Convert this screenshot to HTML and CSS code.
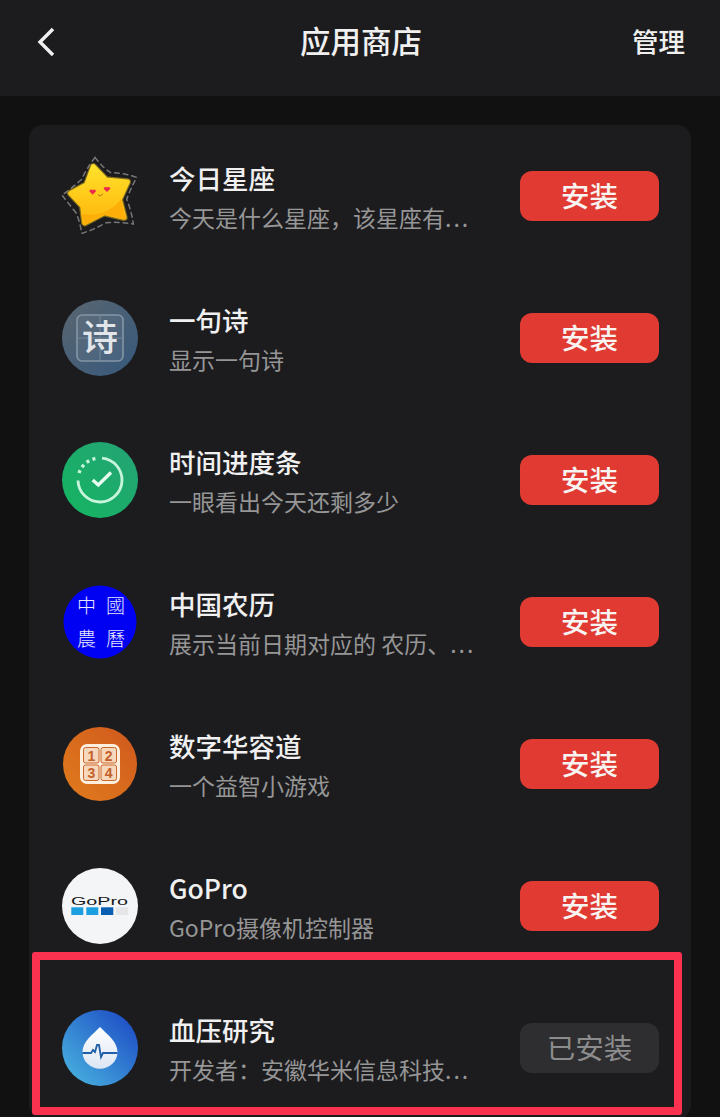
FILE: index.html

```html
<!DOCTYPE html>
<html lang="zh-CN">
<head>
  <meta charset="UTF-8">
  <title>应用商店</title>
  <link rel="stylesheet" href="styles.css">
</head>
<body>

  <header class="top-bar">
    <div class="top-side">
      <svg class="back-icon" width="20" height="32" viewBox="0 0 20 32">
        <path d="M16 3 L3 16 L16 29" fill="none" stroke="#f0f0f0" stroke-width="3.4"/>
      </svg>
    </div>
    <h1 class="top-title">应用商店</h1>
    <div class="top-side top-manage">管理</div>
  </header>

  <main class="app-card">

    <div class="app-row">
      <div class="app-icon">
        <svg width="76" height="76" viewBox="66 54 228 228">
          <defs>
            <linearGradient id="starFill" x1="0" y1="0" x2="0" y2="1">
              <stop offset="0" stop-color="#ffe02a"/>
              <stop offset="1" stop-color="#ffb60c"/>
            </linearGradient>
          </defs>
          <path d="M165 52 Q190 85 212 98 Q250 98 290 112 Q270 150 260 178 Q275 215 280 252 Q240 245 198 248 Q160 270 125 280 Q120 245 108 218 Q85 190 66 165 Q95 145 125 118 Q140 85 165 52 Z" fill="none" stroke="#77777a" stroke-width="4.5" stroke-dasharray="14 12" stroke-linecap="round"/>
          <path d="M160 80 L198 120 L262 126 L238 178 L252 232 L192 218 L134 248 L128 198 L92 160 L140 134 Z" fill="#7d6b1e" stroke="#7d6b1e" stroke-width="22" stroke-linejoin="round"/>
          <path d="M160 80 L198 120 L262 126 L238 178 L252 232 L192 218 L134 248 L128 198 L92 160 L140 134 Z" fill="url(#starFill)" stroke="url(#starFill)" stroke-width="15" stroke-linejoin="round"/>
          <path d="M244 176 L256 238 L192 224 L134 254 L124 222 C170 232 220 212 244 176 Z" fill="#fdae08"/>
          <path d="M158 164 L148 154 Q149 146 158 150 Q167 146 168 154 Z" fill="#ee2a4c"/>
          <path d="M201 156 L191 146 Q192 138 201 142 Q210 138 211 146 Z" fill="#ee2a4c"/>
          <path d="M174 164 Q181 172 188 161" fill="none" stroke="#8a5a10" stroke-width="2.5"/>
        </svg>
      </div>
      <div class="app-text">
        <div class="app-name">今日星座</div>
        <div class="app-desc">今天是什么星座，该星座有<span class="dots">...</span></div>
      </div>
      <button class="install-btn">安装</button>
    </div>

    <div class="app-row">
      <div class="app-icon">
        <svg width="76" height="76" viewBox="0 0 76 76">
          <defs>
            <linearGradient id="poemFill" x1="0" y1="0" x2="1" y2="1">
              <stop offset="0" stop-color="#5a6670"/>
              <stop offset="1" stop-color="#36587c"/>
            </linearGradient>
          </defs>
          <circle cx="38" cy="38" r="38" fill="url(#poemFill)"/>
          <rect x="15" y="15" width="46" height="46" rx="5" fill="#ffffff" fill-opacity="0.05" stroke="#8496a6" stroke-width="1.6"/>
          <path d="M38 15 V61 M15 38 H61" stroke="#75889a" stroke-width="1"/>
          <text class="icon-poem" x="38" y="51" text-anchor="middle">诗</text>
        </svg>
      </div>
      <div class="app-text">
        <div class="app-name">一句诗</div>
        <div class="app-desc">显示一句诗</div>
      </div>
      <button class="install-btn">安装</button>
    </div>

    <div class="app-row">
      <div class="app-icon">
        <svg width="76" height="76" viewBox="0 0 76 76">
          <defs>
            <linearGradient id="timeFill" x1="0" y1="1" x2="1" y2="0">
              <stop offset="0" stop-color="#14b560"/>
              <stop offset="1" stop-color="#25a276"/>
            </linearGradient>
          </defs>
          <circle cx="38" cy="38" r="38" fill="url(#timeFill)"/>
          <path d="M40 16.1 A22 22 0 1 1 16 38.5" fill="none" stroke="#c6f5dc" stroke-width="2.8"/>
          <path d="M17 31 A22 22 0 0 1 36 16.1" fill="none" stroke="#c6f5dc" stroke-width="3.4" stroke-dasharray="3 3.6"/>
          <path d="M30.7 38 L36.3 43 L49 30.5" fill="none" stroke="#e8fbf0" stroke-width="3.4"/>
        </svg>
      </div>
      <div class="app-text">
        <div class="app-name">时间进度条</div>
        <div class="app-desc">一眼看出今天还剩多少</div>
      </div>
      <button class="install-btn">安装</button>
    </div>

    <div class="app-row">
      <div class="app-icon">
        <svg width="76" height="76" viewBox="0 0 76 76">
          <circle cx="38" cy="38" r="36.5" fill="#0000f2"/>
          <text class="icon-almanac" x="24.5" y="29" text-anchor="middle">中</text>
          <text class="icon-almanac" x="53.5" y="29" text-anchor="middle">國</text>
          <text class="icon-almanac" x="24.5" y="62" text-anchor="middle">農</text>
          <text class="icon-almanac" x="53.5" y="62" text-anchor="middle">曆</text>
        </svg>
      </div>
      <div class="app-text">
        <div class="app-name">中国农历</div>
        <div class="app-desc">展示当前日期对应的 农历、<span class="dots">...</span></div>
      </div>
      <button class="install-btn">安装</button>
    </div>

    <div class="app-row">
      <div class="app-icon">
        <svg width="76" height="76" viewBox="0 0 76 76">
          <defs>
            <linearGradient id="numFill" x1="1" y1="0" x2="0" y2="1">
              <stop offset="0" stop-color="#d0581e"/>
              <stop offset="1" stop-color="#e07c1c"/>
            </linearGradient>
          </defs>
          <circle cx="38" cy="38" r="37" fill="url(#numFill)"/>
          <rect x="18" y="18" width="40" height="40" rx="7" fill="#fdeedd"/>
          <rect x="21.5" y="21.5" width="15.5" height="15.5" rx="2" fill="#f8d8bc" stroke="#c9672c" stroke-width="1"/>
          <rect x="39" y="21.5" width="15.5" height="15.5" rx="2" fill="#f8d8bc" stroke="#c9672c" stroke-width="1"/>
          <rect x="21.5" y="39" width="15.5" height="15.5" rx="2" fill="#f8d8bc" stroke="#c9672c" stroke-width="1"/>
          <rect x="39" y="39" width="15.5" height="15.5" rx="2" fill="#f8d8bc" stroke="#c9672c" stroke-width="1"/>
          <text class="icon-num" x="29.3" y="34.5" text-anchor="middle">1</text>
          <text class="icon-num" x="46.7" y="34.5" text-anchor="middle">2</text>
          <text class="icon-num" x="29.3" y="52" text-anchor="middle">3</text>
          <text class="icon-num" x="46.7" y="52" text-anchor="middle">4</text>
        </svg>
      </div>
      <div class="app-text">
        <div class="app-name">数字华容道</div>
        <div class="app-desc">一个益智小游戏</div>
      </div>
      <button class="install-btn">安装</button>
    </div>

    <div class="app-row">
      <div class="app-icon">
        <svg width="76" height="76" viewBox="0 0 76 76">
          <circle cx="38" cy="38" r="38" fill="#f4f5f7"/>
          <text class="icon-gopro" x="9" y="37" textLength="57" lengthAdjust="spacingAndGlyphs">GoPro</text>
          <rect x="9.3" y="39.3" width="12" height="7.7" fill="#1b9fe0"/>
          <rect x="24.3" y="39.3" width="12" height="7.7" fill="#1b9fe0"/>
          <rect x="39" y="39.3" width="12.3" height="7.7" fill="#0b5fb2"/>
          <rect x="54" y="39.3" width="12.3" height="7.7" fill="#e4e6e8"/>
        </svg>
      </div>
      <div class="app-text">
        <div class="app-name">GoPro</div>
        <div class="app-desc">GoPro摄像机控制器</div>
      </div>
      <button class="install-btn">安装</button>
    </div>

    <div class="app-row">
      <div class="app-icon">
        <svg width="76" height="76" viewBox="0 0 76 76">
          <defs>
            <linearGradient id="bloodFill" x1="0.1" y1="0.9" x2="0.9" y2="0.1">
              <stop offset="0" stop-color="#46aedd"/>
              <stop offset="1" stop-color="#1f4fc6"/>
            </linearGradient>
            <linearGradient id="dropFill" x1="0" y1="0" x2="0" y2="1">
              <stop offset="0" stop-color="#ffffff"/>
              <stop offset="1" stop-color="#dce6f4"/>
            </linearGradient>
          </defs>
          <circle cx="38" cy="38" r="38" fill="url(#bloodFill)"/>
          <path d="M38 17 C46 25 55.5 32 55.5 42 C55.5 52 47 58.7 38 58.7 C29 58.7 20.5 52 20.5 42 C20.5 32 30 25 38 17 Z" fill="url(#dropFill)"/>
          <path d="M20.5 43 H29 L31 40 L33 42 L35 35 H37 L39 47 L41 43 H55.5" fill="none" stroke="#1f5ea8" stroke-width="1.8"/>
        </svg>
      </div>
      <div class="app-text">
        <div class="app-name">血压研究</div>
        <div class="app-desc">开发者：安徽华米信息科技<span class="dots">...</span></div>
      </div>
      <button class="install-btn is-installed">已安装</button>
    </div>

  </main>

  <div class="highlight-box"></div>

</body>
</html>
```

FILE: styles.css

```css
html, body {
  height: 1117px;
  margin: 0;
  overflow: hidden;
}

body {
  position: relative;
  background-color: #111112;
  font-family: "Noto Sans CJK SC", "Noto Sans", sans-serif;
}

.top-bar {
  display: grid;
  grid-template-columns: 1fr auto 1fr;
  align-items: center;
  height: 80px;
  padding: 0 35px 16px 37px;
  background-color: #1c1c1f;
  color: #f0f0f0;
}

.top-title {
  margin: 0;
  font-size: 30.5px;
  font-weight: 500;
}

.top-manage {
  text-align: right;
  font-size: 26.5px;
  font-weight: 500;
}

.back-icon {
  display: block;
  margin-top: 4px;
}

.app-card {
  margin: 29px 29px 0 29px;
  background-color: #1c1c1f;
  border-radius: 14px;
}

.app-row {
  display: flex;
  align-items: center;
  height: 142px;
  padding: 0 32px 0 33px;
}

.app-icon {
  width: 76px;
  height: 76px;
  flex: none;
}

.app-icon svg {
  display: block;
  overflow: visible;
}

.app-text {
  flex: 1;
  min-width: 0;
  margin-left: 31px;
  padding-top: 4px;
}

.app-name {
  font-size: 26.5px;
  font-weight: 500;
  line-height: 38px;
  color: #f0f0f0;
}

.app-desc {
  font-size: 23px;
  line-height: 40px;
  color: #969696;
  white-space: nowrap;
}

.dots {
  letter-spacing: 2px;
}

.install-btn {
  flex: none;
  width: 139px;
  height: 50px;
  padding: 0 0 4px 0;
  border: none;
  border-radius: 12px;
  background-color: #e03a33;
  color: #f8f4f2;
  font-family: inherit;
  font-size: 28.5px;
  font-weight: 500;
}

.install-btn.is-installed {
  background-color: #2e2e31;
  color: #8c8c8c;
  font-weight: 400;
}

.highlight-box {
  position: absolute;
  left: 32px;
  top: 952px;
  width: 634px;
  height: 147px;
  border: 8px solid #fb3150;
  border-radius: 3px;
}

.icon-poem {
  font-size: 36px;
  font-weight: 500;
  fill: #e2e6ea;
}

.icon-almanac {
  font-family: "Noto Sans CJK TC", sans-serif;
  font-size: 19px;
  font-weight: 300;
  fill: #e8e8ff;
}

.icon-num {
  font-family: "Liberation Sans", sans-serif;
  font-size: 14px;
  font-weight: 700;
  fill: #c2602a;
}

.icon-gopro {
  font-family: "Liberation Sans", sans-serif;
  font-size: 11px;
  fill: #16181c;
}
```
